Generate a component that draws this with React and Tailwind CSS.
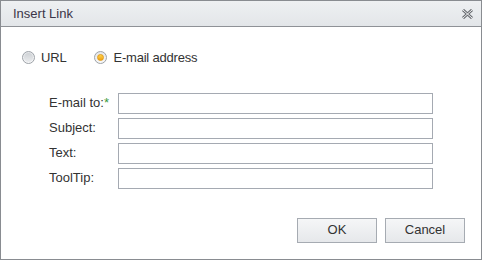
import React, { useState } from 'react';

// Radio bullet drawn with CSS, like the skinned dialog controls
const Radio = ({ checked, label, onClick }) => (
  <label className="flex items-center cursor-pointer" onClick={onClick}>
    <span className="w-[13px] h-[13px] rounded-full border border-[#9da2a8] bg-gradient-to-b from-[#e4e6e9] to-[#f8f8f9] flex items-center justify-center">
      {checked ? (
        <span className="w-[7px] h-[7px] rounded-full bg-gradient-to-b from-[#fbd24a] to-[#f0a10c] border border-[#e39c17]" />
      ) : (
        <span className="w-[9px] h-[9px] rounded-full bg-gradient-to-b from-[#cfd2d6] to-[#e9ebed]" />
      )}
    </span>
    <span className="ml-[6px] text-[13px] tracking-[-0.2px] text-[#333]">{label}</span>
  </label>
);

const Field = ({ label, required }) => (
  <div className="flex items-center h-[25px]">
    <span className="w-[69px] text-[13px] text-[#333] whitespace-nowrap">
      {label}
      {required && <span className="text-[#3a9a3a]">*</span>}
    </span>
    <input className="w-[315px] h-[21px] border border-[#a5aab2] bg-white outline-none px-1 text-[13px]" />
  </div>
);

export default function App() {
  const [mode, setMode] = useState('email');

  return (
    <div className="w-[482px] h-[260px] border border-[#898c91] bg-white flex flex-col font-['Liberation_Sans',Arial,sans-serif]">
      {/* title bar */}
      <div className="h-[26px] shrink-0 border-b border-[#8f9297] bg-gradient-to-b from-[#eef0f2] to-[#e3e6e9] flex items-center justify-between pl-[12px] pr-[8px]">
        <span className="text-[13px] text-[#3b3548]">Insert Link</span>
        <svg width="11" height="10" viewBox="0 0 11 10" className="mt-[1px]">
          <path d="M1 1 L10 9 M10 1 L1 9" stroke="#6a6d72" strokeWidth="3" />
          <path d="M1 1 L10 9 M10 1 L1 9" stroke="#f2f3f4" strokeWidth="1" />
        </svg>
      </div>

      {/* link type */}
      <div className="flex items-center gap-[28px] pl-[21px] pt-[21px]">
        <Radio checked={mode === 'url'} label="URL" onClick={() => setMode('url')} />
        <Radio checked={mode === 'email'} label="E-mail address" onClick={() => setMode('email')} />
      </div>

      {/* fields */}
      <div className="flex flex-col pl-[48px] pt-[23px]">
        <Field label="E-mail to:" required />
        <Field label="Subject:" />
        <Field label="Text:" />
        <Field label="ToolTip:" />
      </div>

      {/* buttons */}
      <div className="flex justify-end gap-[8px] pr-[16px] pt-[27px]">
        <button className="w-[80px] h-[25px] border border-[#a6abb2] bg-gradient-to-b from-[#f5f6f7] to-[#e6e8eb] text-[13px] text-[#333]">OK</button>
        <button className="w-[80px] h-[25px] border border-[#a6abb2] bg-gradient-to-b from-[#f5f6f7] to-[#e6e8eb] text-[13px] text-[#333]">Cancel</button>
      </div>
    </div>
  );
}
